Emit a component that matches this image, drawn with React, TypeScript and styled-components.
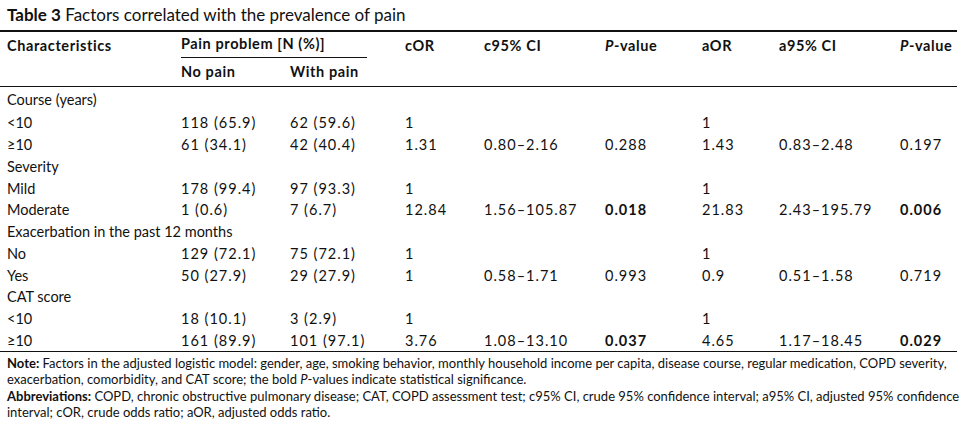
import styled, { createGlobalStyle } from "styled-components";

const GlobalStyle = createGlobalStyle`
  body {
    margin: 0;
    background: #ffffff;
    font-family: Lato, "Open Sans", sans-serif;
    color: #111111;
  }
`;

type Row = {
  label: string;
  group?: boolean;
  cells?: string[];
  bold?: number[];
};

const rows: Row[] = [
  { label: "Course (years)", group: true },
  { label: "<10", cells: ["118 (65.9)", "62 (59.6)", "1", "", "", "1", "", ""] },
  { label: "≥10", cells: ["61 (34.1)", "42 (40.4)", "1.31", "0.80–2.16", "0.288", "1.43", "0.83–2.48", "0.197"] },
  { label: "Severity", group: true },
  { label: "Mild", cells: ["178 (99.4)", "97 (93.3)", "1", "", "", "1", "", ""] },
  {
    label: "Moderate",
    cells: ["1 (0.6)", "7 (6.7)", "12.84", "1.56–105.87", "0.018", "21.83", "2.43–195.79", "0.006"],
    bold: [4, 7],
  },
  { label: "Exacerbation in the past 12 months", group: true },
  { label: "No", cells: ["129 (72.1)", "75 (72.1)", "1", "", "", "1", "", ""] },
  { label: "Yes", cells: ["50 (27.9)", "29 (27.9)", "1", "0.58–1.71", "0.993", "0.9", "0.51–1.58", "0.719"] },
  { label: "CAT score", group: true },
  { label: "<10", cells: ["18 (10.1)", "3 (2.9)", "1", "", "", "1", "", ""] },
  {
    label: "≥10",
    cells: ["161 (89.9)", "101 (97.1)", "3.76", "1.08–13.10", "0.037", "4.65", "1.17–18.45", "0.029"],
    bold: [4, 7],
  },
];

const colWidths = [181, 109, 115, 79, 121, 97, 77, 121, 57];

const App = () => {
  return (
    <Page>
      <GlobalStyle />
      <Title>
        <b>Table 3</b> Factors correlated with the prevalence of pain
      </Title>
      <Table>
        <colgroup>
          {colWidths.map((w, i) => (
            <col key={i} style={{ width: w }} />
          ))}
        </colgroup>
        <thead>
          <HeadRow $top>
            <HeadCell $first>Characteristics</HeadCell>
            <HeadCell colSpan={2}>
              <SpanLabel>Pain problem [N (%)]</SpanLabel>
            </HeadCell>
            <HeadCell>cOR</HeadCell>
            <HeadCell>c95% CI</HeadCell>
            <HeadCell>
              <i>P</i>-value
            </HeadCell>
            <HeadCell>aOR</HeadCell>
            <HeadCell>a95% CI</HeadCell>
            <HeadCell>
              <i>P</i>-value
            </HeadCell>
          </HeadRow>
          <HeadRow>
            <HeadCell $first />
            <HeadCell>No pain</HeadCell>
            <HeadCell>With pain</HeadCell>
            <HeadCell colSpan={6} />
          </HeadRow>
        </thead>
        <tbody>
          {rows.map((r, i) => (
            <BodyRow key={i} $firstRow={i === 0}>
              <Cell $first colSpan={r.group ? 9 : 1}>
                {r.label}
              </Cell>
              {!r.group &&
                r.cells!.map((c, j) => (
                  <Cell key={j} $num $bold={r.bold?.includes(j)}>
                    {c}
                  </Cell>
                ))}
            </BodyRow>
          ))}
        </tbody>
      </Table>
      <Notes>
        <NoteLine>
          <b>Note:</b> Factors in the adjusted logistic model: gender, age, smoking behavior, monthly household
          income per capita, disease course, regular medication, COPD severity,
          <br />
          exacerbation, comorbidity, and CAT score; the bold <i>P</i>-values indicate statistical significance.
        </NoteLine>
        <NoteLine>
          <b>Abbreviations:</b> COPD, chronic obstructive pulmonary disease; CAT, COPD assessment test; c95% CI,
          crude 95% confidence interval; a95% CI, adjusted 95% confidence
          <br />
          interval; cOR, crude odds ratio; aOR, adjusted odds ratio.
        </NoteLine>
      </Notes>
    </Page>
  );
};

export default App;

const Page = styled.div`
  width: 957px;
  padding-top: 5px;
`;

const Title = styled.div`
  font-size: 17px;
  line-height: 20px;
  padding-left: 7px;
  margin-bottom: 5px;
  color: #111;
  b {
    font-weight: 700;
  }
`;

const Table = styled.table`
  width: 957px;
  table-layout: fixed;
  border-collapse: collapse;
  border-top: 2px solid #111;
  border-bottom: 1px solid #111;
  font-size: 14.5px;
`;

const HeadRow = styled.tr<{ $top?: boolean }>`
  height: ${(p) => (p.$top ? "25px" : "28px")};
  border-bottom: ${(p) => (p.$top ? "none" : "1px solid #111")};
`;

const HeadCell = styled.th<{ $first?: boolean }>`
  text-align: left;
  font-weight: 700;
  letter-spacing: 0.6px;
  padding: 0 0 0 ${(p) => (p.$first ? "7px" : "0")};
  vertical-align: middle;
  white-space: nowrap;
  i {
    font-style: italic;
  }
`;

const SpanLabel = styled.div`
  width: 186px;
  border-bottom: 1px solid #111;
  height: 24px;
  line-height: 22px;
  margin-top: 1px;
`;

const BodyRow = styled.tr<{ $firstRow?: boolean }>`
  height: ${(p) => (p.$firstRow ? "26px" : "21.75px")};
  td {
    vertical-align: ${(p) => (p.$firstRow ? "bottom" : "middle")};
    padding-bottom: ${(p) => (p.$firstRow ? "4px" : "0")};
  }
`;

const Cell = styled.td<{ $first?: boolean; $bold?: boolean; $num?: boolean }>`
  padding: 0 0 0 ${(p) => (p.$first ? "7px" : "0")};
  font-weight: ${(p) => (p.$bold ? 700 : 400)};
  letter-spacing: ${(p) => (p.$num ? "1px" : "0")};
  white-space: nowrap;
`;

const Notes = styled.div`
  padding: 3px 0 0 7px;
  font-size: 13px;
  line-height: 16.5px;
  color: #111;
  white-space: nowrap;
`;

const NoteLine = styled.div`
  b {
    font-weight: 700;
  }
  i {
    font-style: italic;
  }
`;
